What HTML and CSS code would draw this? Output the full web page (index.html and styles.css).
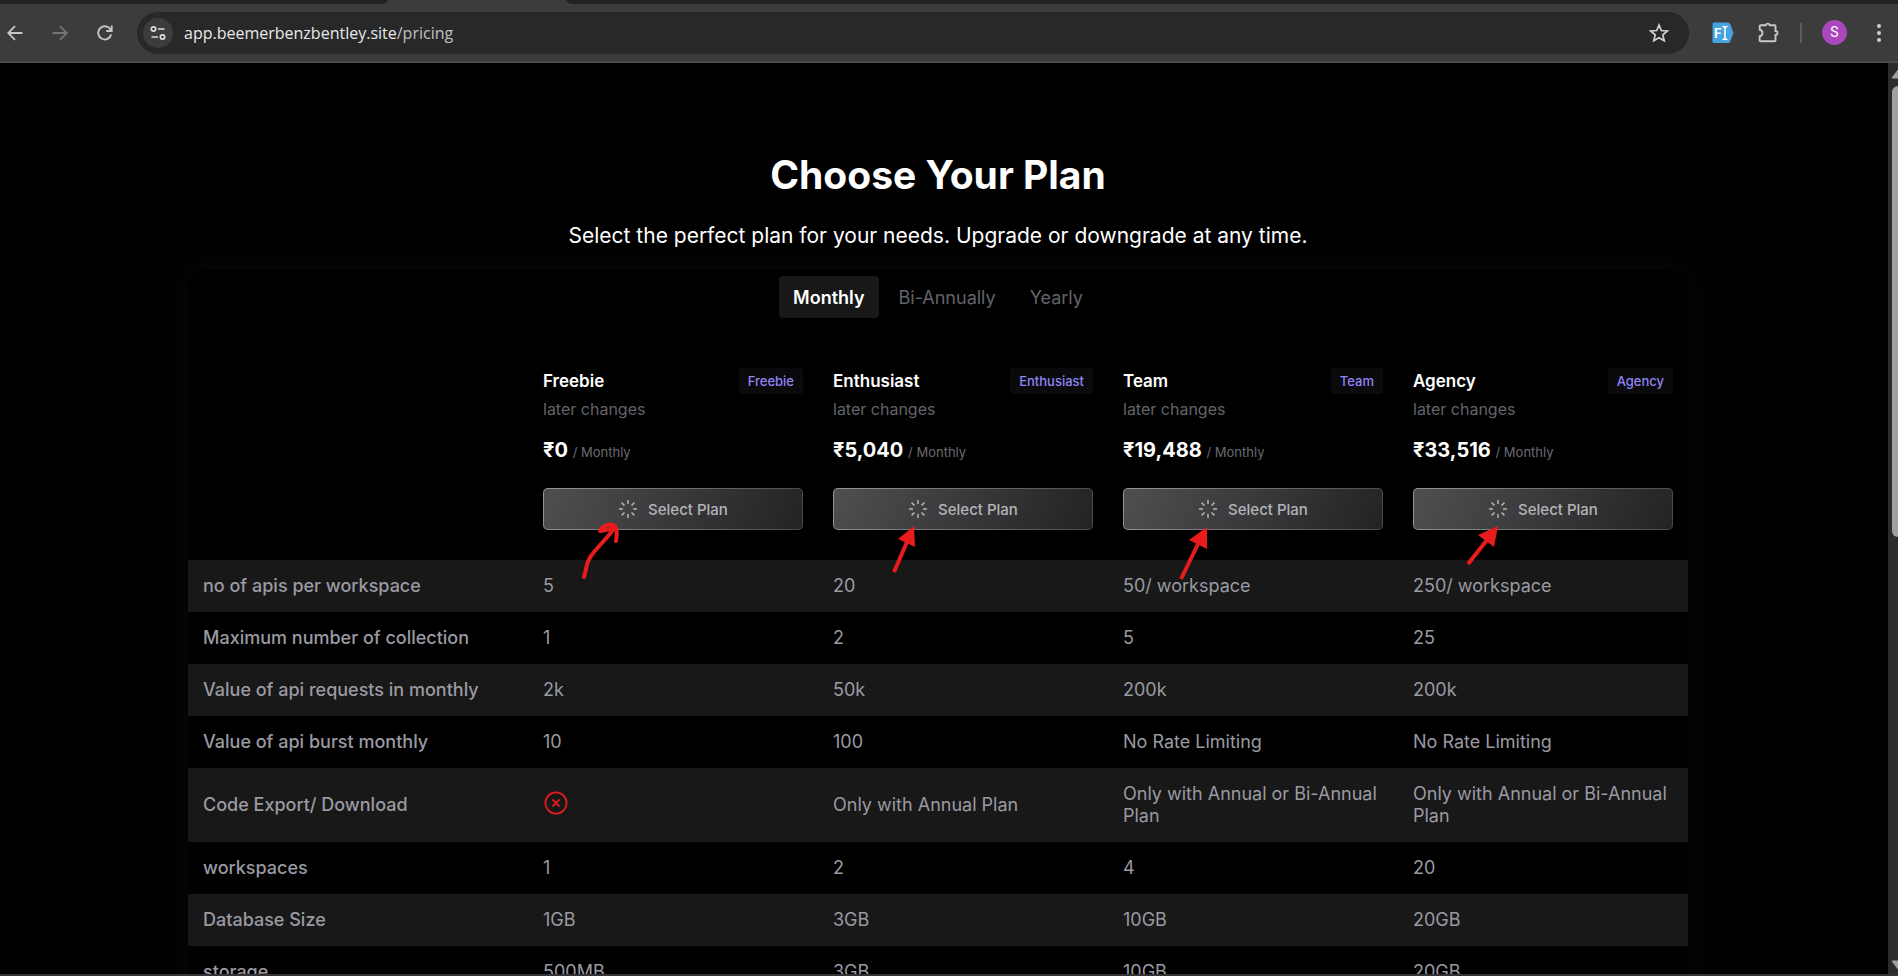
FILE: index.html
```html
<!DOCTYPE html>
<html lang="en">
<head>
<meta charset="utf-8">
<title>Choose Your Plan</title>
<link rel="stylesheet" href="styles.css">
</head>
<body>
<svg class="defs" aria-hidden="true">
  <symbol id="spinner" viewBox="0 0 20 20">
    <path d="M10 1v4M10 15v4M1 10h4M15 10h4M3.600 3.600l2.900 2.900M13.500 13.500l2.900 2.900M3.600 16.400l2.900-2.900M13.500 6.500l2.900-2.900" fill="none" stroke="currentColor" stroke-width="1.500"/>
  </symbol>
</svg>
<div class="tabstrip"><span class="tab-idle tab-left"></span><span class="tab-idle tab-rest"></span></div>
<header class="toolbar">
  <nav class="nav" aria-label="Browser navigation">
    <button class="icon-btn" aria-label="Back"><svg width="16" height="16" viewBox="0 0 16 16"><path d="M15.500 8H1.500M8 1.200L1.200 8 8 14.800" fill="none" stroke="#c7c7c7" stroke-width="1.800"/></svg></button>
    <button class="icon-btn" aria-label="Forward"><svg width="16" height="16" viewBox="0 0 16 16"><path d="M.5 8h14M8 1.200L14.800 8 8 14.800" fill="none" stroke="#757575" stroke-width="1.800"/></svg></button>
    <button class="icon-btn" aria-label="Reload"><svg width="16" height="16" viewBox="0 0 16 16"><path d="M14.200 9.500A6.600 6.600 0 1 1 12.800 3.500L14.500 5.300M14.700 0.500V6H9.200" fill="none" stroke="#c7c7c7" stroke-width="1.900"/></svg></button>
  </nav>
  <div class="address">
    <button class="site-info" aria-label="Site information"><svg width="16" height="16" viewBox="0 0 16 16"><g fill="none" stroke="#dcdcdc" stroke-width="1.700"><circle cx="3.500" cy="4" r="2.200"/><path d="M8 4h6.500M1.500 12H8"/><circle cx="12.500" cy="12" r="2.200"/></g></svg></button>
    <span class="url">app.beemerbenzbentley.site<span class="path">/pricing</span></span>
    <button class="star" aria-label="Bookmark"><svg width="20" height="20" viewBox="0 0 20 20"><path d="M10 2l2.300 5.500 6 .5-4.500 3.900 1.400 5.900L10 14.700l-5.200 3.100 1.400-5.900L1.700 8l6-.5z" fill="none" stroke="#cfcfcf" stroke-width="1.700"/></svg></button>
  </div>
  <div class="extensions">
    <button class="icon-btn ext-f" aria-label="Font finder"><svg width="22" height="22" viewBox="0 0 22 22"><path d="M2 .5h14q1.500 0 2.200 1.500L21.500 11l-3.300 8.500q-.7 1.500-2.200 1.500H2q-1.500 0-1.500-1.500V2Q.5.5 2 .5z" fill="#45a3e0"/><text x="2" y="16" class="ext-letter">F</text><path d="M10.500 4.500q2.500 0 2.500 1.500v10q0 1.500-2.500 1.500M15.500 4.500Q13 4.500 13 6M15.500 17.500q-2.500 0-2.500-1.500" fill="none" stroke="#fff" stroke-width="1.600"/></svg></button>
    <button class="icon-btn ext-puzzle" aria-label="Extensions"><svg width="22" height="22" viewBox="0 0 22 22"><path d="M2.500 3.200h5.300a2 2 0 0 1 3.900 0h5q.8 0 .8.800v5a2 2 0 0 1 0 4v5.500q0 .8-.8.800H2.500q-.8 0-.8-.8v-4.200q2.800-.6 2.800-3.300T1.700 7.700V4q0-.8.800-.8z" fill="none" stroke="#c7c7c7" stroke-width="1.900"/></svg></button>
    <span class="divider"></span>
    <button class="avatar" aria-label="Profile">S</button>
    <button class="icon-btn" aria-label="Menu"><svg width="6" height="20" viewBox="0 0 6 20"><g fill="#d0d0d0"><circle cx="3" cy="3" r="2"/><circle cx="3" cy="10" r="2"/><circle cx="3" cy="17" r="2"/></g></svg></button>
  </div>
</header>
<div class="viewport">
  <main class="page">
    <h1 class="title">Choose Your Plan</h1>
    <p class="subtitle">Select the perfect plan for your needs. Upgrade or downgrade at any time.</p>
    <section class="panel">
      <div class="periods">
        <button class="period active">Monthly</button>
        <button class="period">Bi-Annually</button>
        <button class="period">Yearly</button>
      </div>
      <table class="plans">
        <colgroup><col class="col-feature"><col><col><col><col></colgroup>
        <thead>
          <tr>
            <td></td>
            <th scope="col">
              <div class="plan-head"><span class="plan-name">Freebie</span><span class="badge">Freebie</span></div>
              <p class="plan-desc">later changes</p>
              <p class="price">₹0 <span class="per">/ Monthly</span></p>
              <div class="action"><button class="select"><svg class="spin"><use href="#spinner"/></svg>Select Plan</button>
                <svg class="arrow" viewBox="-130 0 260 100" aria-hidden="true"><path d="M-89 89C-86 79-87 75-82 68C-75 58-65 50-59 40" class="stroke round"/><path d="M-73 43C-71 37-61 35-58 38C-56 41-56 47-57 53" class="stroke round"/><path d="M-72 43L-59 40" class="stroke round"/></svg></div>
            </th>
            <th scope="col">
              <div class="plan-head"><span class="plan-name">Enthusiast</span><span class="badge">Enthusiast</span></div>
              <p class="plan-desc">later changes</p>
              <p class="price">₹5,040 <span class="per">/ Monthly</span></p>
              <div class="action"><button class="select"><svg class="spin"><use href="#spinner"/></svg>Select Plan</button>
                <svg class="arrow" viewBox="-130 0 260 100" aria-hidden="true"><path d="M-69 84L-56 54" class="stroke"/><path d="M-49 38L-65 51L-48 59z" class="tip"/></svg></div>
            </th>
            <th scope="col">
              <div class="plan-head"><span class="plan-name">Team</span><span class="badge">Team</span></div>
              <p class="plan-desc">later changes</p>
              <p class="price">₹19,488 <span class="per">/ Monthly</span></p>
              <div class="action"><button class="select"><svg class="spin"><use href="#spinner"/></svg>Select Plan</button>
                <svg class="arrow" viewBox="-130 0 260 100" aria-hidden="true"><path d="M-72 91L-54 54" class="stroke"/><path d="M-46 39L-64 52L-46 61z" class="tip"/></svg></div>
            </th>
            <th scope="col">
              <div class="plan-head"><span class="plan-name">Agency</span><span class="badge">Agency</span></div>
              <p class="plan-desc">later changes</p>
              <p class="price">₹33,516 <span class="per">/ Monthly</span></p>
              <div class="action"><button class="select"><svg class="spin"><use href="#spinner"/></svg>Select Plan</button>
                <svg class="arrow" viewBox="-130 0 260 100" aria-hidden="true"><path d="M-75 76L-56 52" class="stroke"/><path d="M-45 38L-65 47L-49 59z" class="tip"/></svg></div>
            </th>
          </tr>
        </thead>
        <tbody>
          <tr><th scope="row">no of apis per workspace</th><td>5</td><td>20</td><td>50/ workspace</td><td>250/ workspace</td></tr>
          <tr><th scope="row">Maximum number of collection</th><td>1</td><td>2</td><td>5</td><td>25</td></tr>
          <tr><th scope="row">Value of api requests in monthly</th><td>2k</td><td>50k</td><td>200k</td><td>200k</td></tr>
          <tr><th scope="row">Value of api burst monthly</th><td>10</td><td>100</td><td>No Rate Limiting</td><td>No Rate Limiting</td></tr>
          <tr><th scope="row">Code Export/ Download</th><td><svg class="no" viewBox="0 0 26 26" role="img" aria-label="Not included"><g fill="none" stroke="#dc1c1c" stroke-width="1.800"><circle cx="13" cy="13" r="10.600"/><path d="M9.500 9.500l7 7M16.500 9.500l-7 7"/></g></svg></td><td>Only with Annual Plan</td><td>Only with Annual or Bi-Annual Plan</td><td>Only with Annual or Bi-Annual Plan</td></tr>
          <tr><th scope="row">workspaces</th><td>1</td><td>2</td><td>4</td><td>20</td></tr>
          <tr><th scope="row">Database Size</th><td>1GB</td><td>3GB</td><td>10GB</td><td>20GB</td></tr>
          <tr><th scope="row">storage</th><td>500MB</td><td>3GB</td><td>10GB</td><td>20GB</td></tr>
        </tbody>
      </table>
    </section>
  </main>
  <div class="scrollbar" aria-hidden="true">
    <svg width="16" height="10" viewBox="0 0 16 10"><path d="M8 1L14 9H2z" fill="#9f9f9f" stroke="#9f9f9f" stroke-linejoin="round"/></svg>
    <div class="track"><div class="thumb"></div></div>
    <svg width="16" height="10" viewBox="0 0 16 10"><path d="M8 9L14 1H2z" fill="#9f9f9f" stroke="#9f9f9f" stroke-linejoin="round"/></svg>
  </div>
</div>
</body>
</html>
```
FILE: styles.css
```css
* { box-sizing: border-box; }
html, body { height: 100%; }
body {
  margin: 0;
  display: flex;
  flex-direction: column;
  overflow: hidden;
  background: #000;
  color: #fff;
  font-family: Inter, "Noto Sans", sans-serif;
}
button { font: inherit; color: inherit; border: 0; background: none; padding: 0; cursor: pointer; }
svg { display: block; flex: none; }
p, h1 { margin: 0; }
.defs { position: absolute; width: 0; height: 0; }

.tabstrip { display: flex; justify-content: space-between; gap: 178px; height: 4px; flex: none; background: #3c3c3c; }
.tab-idle { background: #202322; }
.tab-left { width: 388px; border-bottom-right-radius: 8px 4px; }
.tab-rest { flex: 1; border-bottom-left-radius: 8px 4px; }

.toolbar {
  display: flex;
  align-items: center;
  flex: none;
  height: 59px;
  padding: 0 16px 0 7px;
  background: #3c3c3c;
  border-bottom: 2px solid #4a4a4a;
}
.nav { display: flex; gap: 29px; }
.address {
  flex: 1;
  display: flex;
  align-items: center;
  height: 42px;
  margin: 0 23px 0 24px;
  padding: 0 20px 0 6px;
  border-radius: 21px;
  background: #282828;
}
.site-info { display: grid; place-items: center; width: 30px; height: 30px; border-radius: 50%; background: #3c3c3c; }
.url { flex: 1; margin-left: 11px; font: 16px/24px "Open Sans", "Noto Sans", sans-serif; color: #e8e8e8; }
.path { color: #c0c0c0; }
.extensions { display: flex; align-items: center; gap: 20px; }
.ext-letter { font: 700 13px Inter, sans-serif; fill: #fff; }
.ext-puzzle { margin-left: 4px; }
.divider { width: 2px; height: 20px; background: #5c5c5c; }
.avatar { width: 25px; height: 25px; border-radius: 50%; background: #ab47bc; font: 14px/25px Roboto, sans-serif; text-align: center; margin-right: 9px; }

.viewport { flex: 1; display: flex; min-height: 0; border-bottom: 2px solid #353335; }
.page { flex: 1; min-width: 0; overflow: hidden; padding: 88px 12px 0 0; }
.title { font-size: 39px; line-height: 48px; font-weight: 700; text-align: center; }
.subtitle { margin-top: 23px; font-size: 21px; line-height: 28px; text-align: center; }
.panel {
  width: 80%;
  max-width: 1500px;
  margin: 20px auto 0;
  padding-top: 6px;
  border-radius: 12px;
  background: #000;
  box-shadow: 0 0 36px #0a0a0a;
}
.periods { display: flex; justify-content: center; gap: 6px; }
.period { height: 42px; padding: 0 14px; border-radius: 4px; font-size: 18px; color: #63636a; }
.period.active { background: #181818; color: #fff; font-weight: 600; }

.plans { width: 100%; table-layout: fixed; border-collapse: collapse; text-align: left; }
.col-feature { width: 340px; }
.plans thead th { padding: 50px 15px 30px; font-weight: 400; vertical-align: top; }
.plan-head { display: flex; justify-content: space-between; align-items: center; }
.plan-name { font-size: 17px; line-height: 26px; font-weight: 600; }
.badge { padding: 0 9px; border-radius: 3px; background: #0a0a0c; color: #8f85f5; font-size: 13px; line-height: 26px; font-weight: 500; }
.plan-desc { margin-top: 5px; font-size: 16px; line-height: 20px; color: #63636a; }
.price { margin-top: 17px; font-size: 20px; line-height: 28px; font-weight: 700; }
.per { font-size: 13px; line-height: 20px; font-weight: 400; color: #6b6b72; }
.action { position: relative; margin-top: 24px; }
.select {
  display: flex;
  align-items: center;
  justify-content: center;
  gap: 10px;
  width: 100%;
  height: 42px;
  border: 1px solid transparent;
  border-radius: 5px;
  background: linear-gradient(115deg, #4f4f51, #232325) padding-box, linear-gradient(115deg, #969698, #48484a) border-box;
  color: #b4b4b6;
  font-size: 15px;
  font-weight: 500;
}
.spin { width: 20px; height: 20px; }
.arrow { position: absolute; left: 50%; top: 0; width: 260px; height: 100px; transform: translateX(-50%); pointer-events: none; z-index: 1; }
.stroke { fill: none; stroke: #e81c1c; stroke-width: 4; }
.round { stroke-linecap: round; stroke-linejoin: round; }
.tip { fill: #e81c1c; }

.plans tbody th, .plans tbody td { height: 52px; padding: 15px; font-size: 18px; line-height: 22px; font-weight: 400; color: #9a9aa2; }
.plans tbody th { font-weight: 500; }
.plans tbody tr:nth-child(odd) { background: #181818; }
.no { width: 26px; height: 26px; margin-bottom: 4px; }

.scrollbar { display: flex; flex-direction: column; align-items: flex-start; justify-content: space-between; gap: 7px; width: 10px; padding: 6px 0 4px 2px; background: #2c2c2c; overflow: hidden; }
.track { flex: 1; width: 100%; padding-left: 2px; }
.thumb { height: 52%; width: 12px; border-radius: 6px; background: #9f9f9f; }
```
